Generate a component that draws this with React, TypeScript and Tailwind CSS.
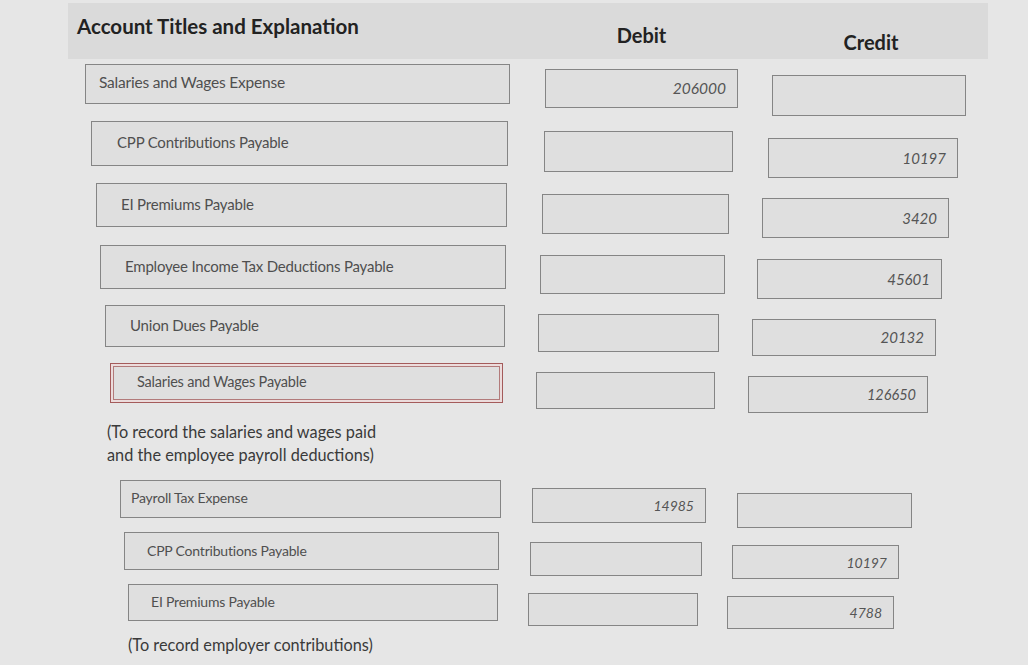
import React from 'react';

type Row = {
  label: string;
  debit?: string;
  credit?: string;
  rowCls: string;
  acctCls: string;
  debitCls: string;
  creditCls: string;
  highlight?: boolean;
};

const firstEntry: Row[] = [
  {
    label: 'Salaries and Wages Expense',
    debit: '206000',
    rowCls: 'h-[57px]',
    acctCls: 'ml-[85px] w-[425px] h-[40px] pl-[13px] pb-[3px] text-[15.5px]',
    debitCls: 'ml-[35px] w-[193px] h-[39px] mt-[5px] text-[15.5px]',
    creditCls: 'ml-[34px] w-[194px] h-[41px] mt-[11px] text-[15.5px]',
  },
  {
    label: 'CPP Contributions Payable',
    credit: '10197',
    rowCls: 'h-[62px]',
    acctCls: 'ml-[91px] w-[417px] h-[45px] pl-[25px] pb-[2px] text-[15px]',
    debitCls: 'ml-[36px] w-[189px] h-[41px] mt-[10px] text-[15px]',
    creditCls: 'ml-[35px] w-[190px] h-[40px] mt-[17px] text-[15px]',
  },
  {
    label: 'EI Premiums Payable',
    credit: '3420',
    rowCls: 'h-[62px]',
    acctCls: 'ml-[96px] w-[411px] h-[44px] pl-[24px] pb-[2px] text-[15px]',
    debitCls: 'ml-[35px] w-[187px] h-[40px] mt-[11px] text-[15px]',
    creditCls: 'ml-[33px] w-[187px] h-[40px] mt-[15px] text-[15px]',
  },
  {
    label: 'Employee Income Tax Deductions Payable',
    credit: '45601',
    rowCls: 'h-[60px]',
    acctCls: 'ml-[100px] w-[406px] h-[44px] pl-[24px] pb-[2px] text-[15px]',
    debitCls: 'ml-[34px] w-[185px] h-[39px] mt-[10px] text-[15px]',
    creditCls: 'ml-[32px] w-[185px] h-[40px] mt-[14px] text-[15px]',
  },
  {
    label: 'Union Dues Payable',
    credit: '20132',
    rowCls: 'h-[58px]',
    acctCls: 'ml-[105px] w-[400px] h-[42px] pl-[24px] pb-[2px] text-[15px]',
    debitCls: 'ml-[33px] w-[181px] h-[38px] mt-[9px] text-[15px]',
    creditCls: 'ml-[33px] w-[184px] h-[37px] mt-[14px] text-[15px]',
  },
  {
    label: 'Salaries and Wages Payable',
    credit: '126650',
    highlight: true,
    rowCls: 'h-[55px]',
    acctCls: 'ml-[110px] w-[393px] h-[40px] pl-[26px] pb-[2px] text-[14.5px]',
    debitCls: 'ml-[33px] w-[179px] h-[37px] mt-[9px] text-[14.5px]',
    creditCls: 'ml-[33px] w-[180px] h-[37px] mt-[13px] text-[14.5px]',
  },
];

const secondEntry: Row[] = [
  {
    label: 'Payroll Tax Expense',
    debit: '14985',
    rowCls: 'h-[52px]',
    acctCls: 'ml-[120px] w-[381px] h-[38px] pl-[10px] pb-[4px] text-[14px]',
    debitCls: 'ml-[31px] w-[174px] h-[35px] mt-[8px] text-[14px]',
    creditCls: 'ml-[31px] w-[175px] h-[35px] mt-[13px] text-[14px]',
  },
  {
    label: 'CPP Contributions Payable',
    credit: '10197',
    rowCls: 'h-[52px]',
    acctCls: 'ml-[124px] w-[375px] h-[38px] pl-[22px] pb-[2px] text-[14px]',
    debitCls: 'ml-[31px] w-[172px] h-[34px] mt-[10px] text-[14px]',
    creditCls: 'ml-[30px] w-[167px] h-[34px] mt-[13px] text-[14px]',
  },
  {
    label: 'EI Premiums Payable',
    credit: '4788',
    rowCls: 'h-[44px]',
    acctCls: 'ml-[128px] w-[370px] h-[37px] pl-[22px] pb-[2px] text-[14px]',
    debitCls: 'ml-[30px] w-[170px] h-[33px] mt-[9px] text-[14px]',
    creditCls: 'ml-[29px] w-[167px] h-[33px] mt-[12px] text-[14px]',
  },
];

const boxBase = 'bg-[#dfdfdf] border border-[#858585] flex items-center shrink-0';

const EntryRow: React.FC<{ row: Row }> = ({ row }) => (
  <div className={`flex items-start ${row.rowCls}`}>
    <div
      className={`${boxBase} ${row.acctCls} text-[#4f4f4f] tracking-[-0.2px] ${
        row.highlight ? 'border-[#a45b5b] shadow-[inset_0_0_0_2px_#ecdcdc,inset_0_0_0_3px_#b27a7a]' : ''
      }`}
    >
      {row.label}
    </div>
    <div className={`${boxBase} ${row.debitCls} justify-end pr-[11px] italic text-[#555]`}>{row.debit}</div>
    <div className={`${boxBase} ${row.creditCls} justify-end pr-[11px] italic text-[#555]`}>{row.credit}</div>
  </div>
);

export default function App() {
  return (
    <div className="w-full h-[665px] overflow-hidden bg-[#e6e6e6] font-['Lato','Liberation_Sans',sans-serif]">
      <div className="ml-[68px] mt-[3px] w-[920px] h-[56px] bg-[#dadada] flex items-start font-bold text-[#222]">
        <div className="w-[477px] pl-[9px] mt-[8px] text-[20.5px]">Account Titles and Explanation</div>
        <div className="w-[193px] text-center mt-[17px] text-[20px]">Debit</div>
        <div className="w-[34px]" />
        <div className="w-[194px] text-center mt-[24px] pl-[4px] text-[20px]">Credit</div>
      </div>

      <div className="mt-[5px]">
        {firstEntry.map((row, i) => (
          <EntryRow key={i} row={row} />
        ))}

        <div className="h-[62px] ml-[107px] pt-[2px] text-[16.3px] leading-[23px] text-[#3a3a3a]">
          <p>(To record the salaries and wages paid</p>
          <p>and the employee payroll deductions)</p>
        </div>

        {secondEntry.map((row, i) => (
          <EntryRow key={i} row={row} />
        ))}

        <p className="ml-[128px] mt-[5px] text-[16.3px] text-[#3a3a3a]">(To record employer contributions)</p>
      </div>
    </div>
  );
}
